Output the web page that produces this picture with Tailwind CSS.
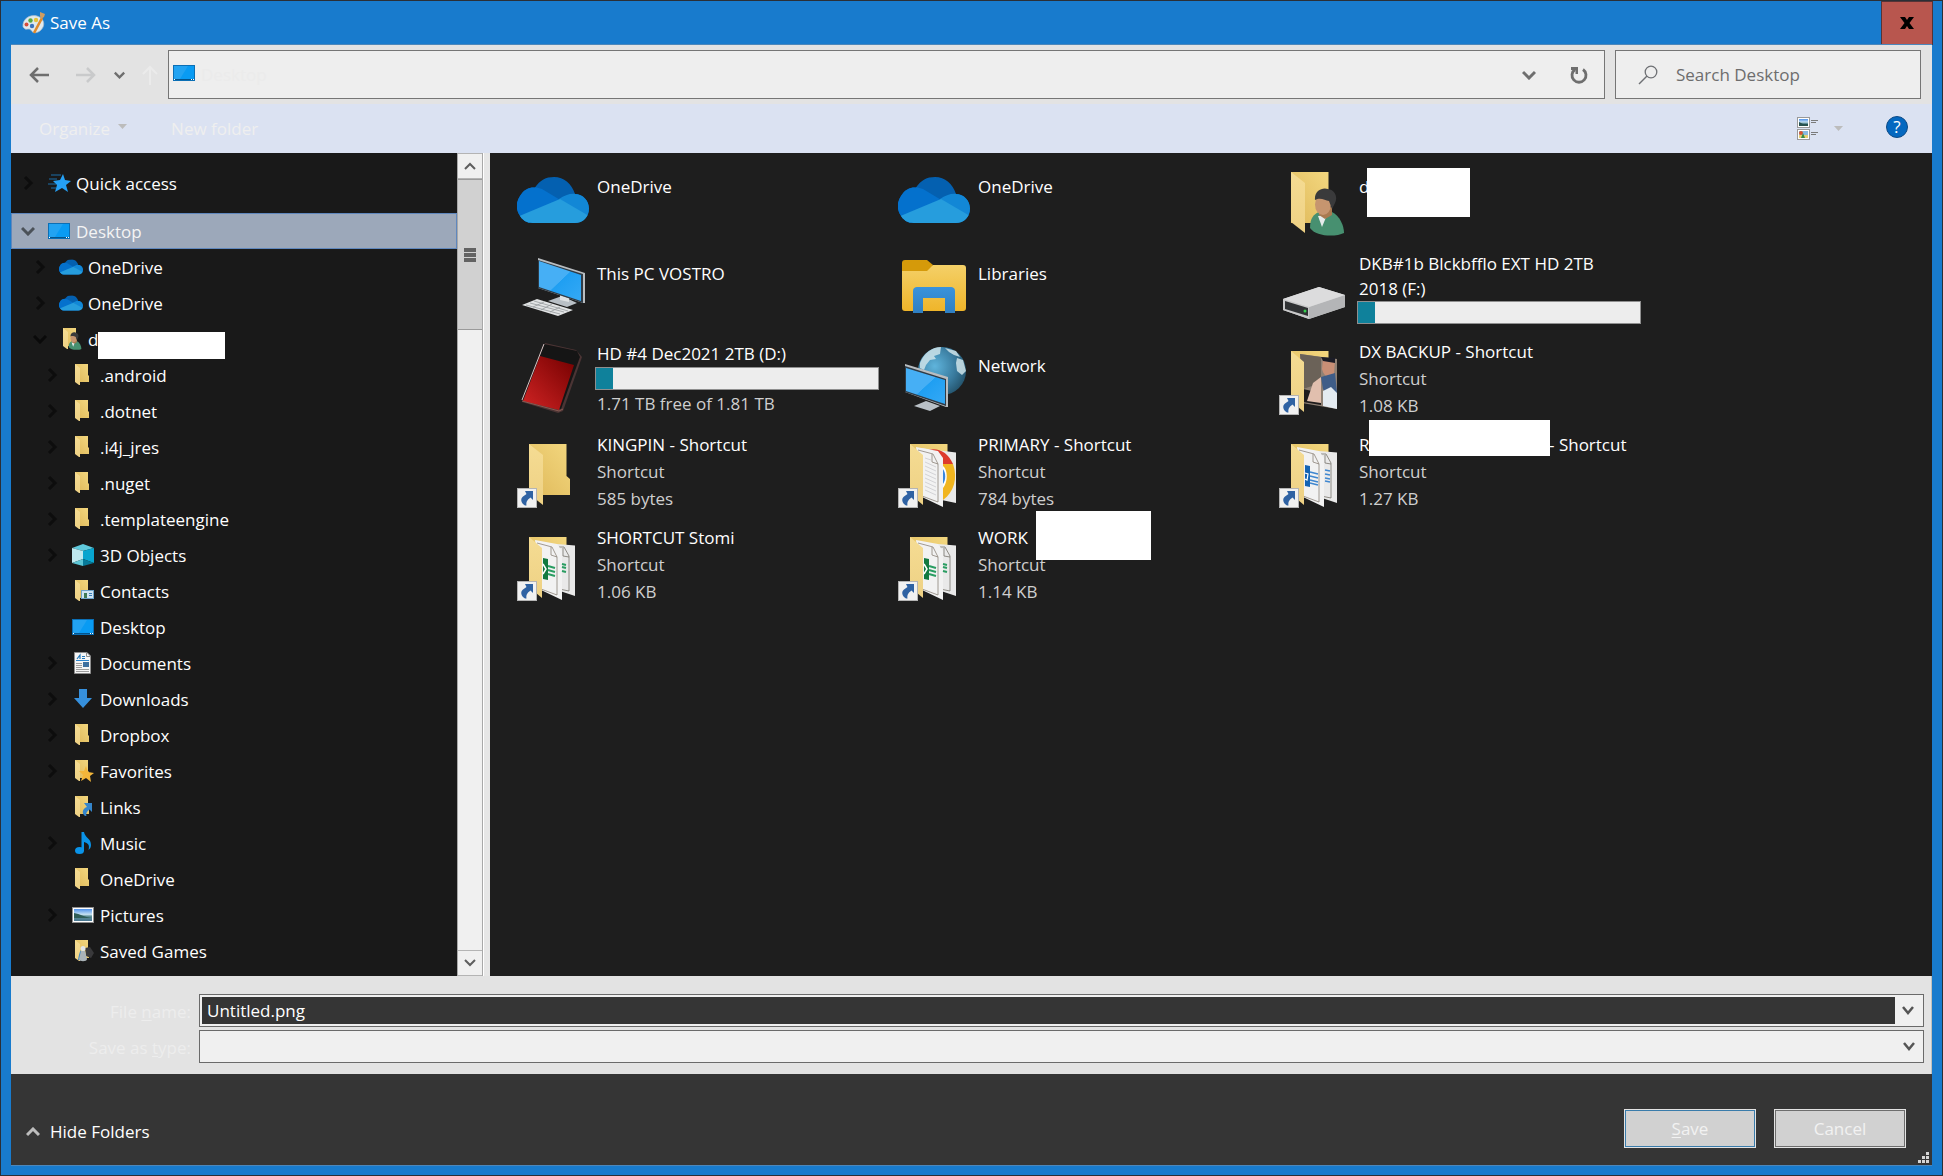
<!DOCTYPE html>
<html lang="en">
<head>
  <meta charset="UTF-8" />
  <title>Save As</title>
  <meta name="viewport" content="width=device-width, initial-scale=1" />
  <script src="https://cdn.jsdelivr.net/npm/@tailwindcss/browser@4"></script>
</head>
<body class="min-h-screen flex flex-col bg-[#187bcd] border border-[#2b2f36] px-[10px] pb-[9px] font-['Open_Sans','Noto_Sans',sans-serif] text-[17px] leading-[27px] text-white">

  <!-- Icon sprite -->
  <svg width="0" height="0" class="absolute" aria-hidden="true">
    <defs>
      <linearGradient id="gFolder" x1="0" y1="1" x2="1" y2="0"><stop offset="0" stop-color="#dfb95a" /><stop offset="1" stop-color="#f3d77f" /></linearGradient>
      <linearGradient id="gFlap" x1="0" y1="0" x2="0" y2="1"><stop offset="0" stop-color="#f5dc93" /><stop offset="1" stop-color="#eed184" /></linearGradient>
      <linearGradient id="gScreen" x1="0" y1="0" x2="1" y2="1"><stop offset="0" stop-color="#46aff5" /><stop offset=".5" stop-color="#46aff5" /><stop offset=".51" stop-color="#1f9ff2" /><stop offset="1" stop-color="#35a9f5" /></linearGradient>
      <linearGradient id="gRed" x1="1" y1="0" x2="0" y2="1"><stop offset="0" stop-color="#740000" /><stop offset="1" stop-color="#d12424" /></linearGradient>
      <linearGradient id="gLib" x1="0" y1="0" x2="0" y2="1"><stop offset="0" stop-color="#f4d068" /><stop offset="1" stop-color="#efb52a" /></linearGradient>
      <linearGradient id="gArch" x1="0" y1="0" x2="0" y2="1"><stop offset="0" stop-color="#3a93dc" /><stop offset="1" stop-color="#2f7fc2" /></linearGradient>
      <radialGradient id="gGlobe" cx=".35" cy=".4" r=".75"><stop offset="0" stop-color="#5fb4dc" /><stop offset=".6" stop-color="#38799c" /><stop offset="1" stop-color="#1f4a60" /></radialGradient>
      <linearGradient id="gDrive" x1="0" y1="0" x2="1" y2="1"><stop offset="0" stop-color="#dedede" /><stop offset="1" stop-color="#b9babb" /></linearGradient>
      <linearGradient id="gPhoto" x1="0" y1="0" x2="0" y2="1"><stop offset="0" stop-color="#4d90ea" /><stop offset=".45" stop-color="#c5e0f2" /><stop offset=".6" stop-color="#5f8f96" /><stop offset="1" stop-color="#477590" /></linearGradient>
    </defs>

    <symbol id="cloud" viewBox="0 0 72 46">
      <clipPath id="cloudShape"><path d="M16 46A16 17 0 0 1 3 19C7 12 13 10 18 10.500C23 3 29 0 37 0C47 0 55 7 58 17C66 17 72 24 72 31.500C72 40 66 46 58 46Z" /></clipPath>
      <g clip-path="url(#cloudShape)">
        <rect width="72" height="46" fill="#0460b0" />
        <path d="M0 10C8 9 18 9 25 12L45 24L12 46H0Z" fill="#0471cd" />
        <path d="M42 22C48 18 53 16 60 17L72 18V40L66 39Z" fill="#1287d6" />
        <path d="M0 40L43 22L72 39V46H0Z" fill="#269ddd" />
      </g>
    </symbol>

    <symbol id="desktop" viewBox="0 0 22 16">
      <rect x=".5" y=".5" width="21" height="15" fill="#099bf3" stroke="#0b6fb5" />
      <path d="M1 1H15L7 14H1Z" fill="#22a3f2" /><path d="M1 14.500H21" stroke="#04548c" />
      <path d="M1 14.500H2M18 14.500H19M20 14.500H21" stroke="#fff" />
    </symbol>

    <symbol id="folder-sm" viewBox="0 0 22 22">
      <path d="M3 0H16V11L17 12V18H3Z" fill="url(#gFolder)" /><path d="M3 0L8 4V21L7 21L3 18Z" fill="url(#gFlap)" />
    </symbol>

    <symbol id="folder" viewBox="0 0 72 72">
      <path d="M12 8H49.500V40L53 43V59H12Z" fill="url(#gFolder)" /><path d="M12 8L26 19V69L12 58Z" fill="url(#gFlap)" />
    </symbol>

    <symbol id="badge" viewBox="0 0 72 72">
      <rect x=".5" y="52.500" width="19" height="19" fill="#f1f1f1" stroke="#b4b4b4" />
      <path d="M8 55H16V64L13.500 61.500C10 64 9 66 9.500 69.500H8C4 67 3 63 6 60.500L9.500 58Z" fill="#2f62a3" />
    </symbol>

    <symbol id="docs" viewBox="0 0 72 72">
      <path d="M12 8H49.500V59H12Z" fill="url(#gFolder)" />
      <path d="M40 15L58 16.500V67L40 61Z" fill="#e9e9e9" /><path d="M42 18L47 18L52 27V62L42 60M46 19V27L52 28" fill="none" stroke="#77736c" stroke-width=".8" />
      <path d="M18 11L40 15L45 22V71L24 61Z" fill="#f2f2f2" /><path d="M20 14L35 18L40 28V66L24 60M34 18V26L40 28" fill="none" stroke="#8b8378" stroke-width=".8" />
      <path d="M12 8L25 19V69L12 58Z" fill="url(#gFlap)" />
    </symbol>

    <symbol id="person" viewBox="0 0 34 48">
      <path d="M0 40C0 30 4 26 9 24H22C30 28 34 38 34 45C26 49 6 49 0 40Z" fill="#479070" />
      <path d="M8 28L12 39L17 27Z" fill="#e6ecec" /><path d="M9 22V27L15 31L22 27V19Z" fill="#a97a50" />
      <ellipse cx="13" cy="16.500" rx="8" ry="10.500" fill="#c6956f" />
      <path d="M5 12C4 3 12 -1 18 1C25 2 28 9 25 15L22 21L19 13C15 12 10 9 5 12Z" fill="#3a3a3b" />
    </symbol>

    <symbol id="chev-r" viewBox="0 0 12 16"><path d="M2 2L8 8L2 14" fill="none" stroke="#0d0d0d" stroke-width="3" /></symbol>
    <symbol id="chev-d" viewBox="0 0 14 10"><path d="M1 2L7 8L13 2" fill="none" stroke="currentColor" stroke-width="3" /></symbol>
  </svg>

  <!-- Title bar -->
  <header class="flex h-[43px] items-center pl-[11px]">
    <svg class="h-6 w-6" viewBox="0 0 24 24">
      <path d="M1 16C0 8 8 3 15 5C22 7 24 14 19 19C15 23 10 22 9 19C7 17 5 19 3 18Z" fill="#dfe9ee" stroke="#a9bccb" stroke-width=".7" />
      <circle cx="4.500" cy="13.500" r="2" fill="#d64c3c" /><circle cx="8.500" cy="9.500" r="2.200" fill="#57a845" /><circle cx="14" cy="9" r="2.200" fill="#e5c23c" /><circle cx="10" cy="15" r="2.200" fill="#3b74bd" />
      <path d="M12 22L20 7" stroke="#e08a2b" stroke-width="2.600" /><path d="M18 1L23 3L22 6L19 8L18 5Z" fill="#cf9d62" />
    </svg>
    <h1 class="ml-1">Save As</h1>
    <button aria-label="Close" class="-mr-px ml-auto flex h-[44px] w-[52px] items-center justify-center border border-[#553336] bg-[#b8564e]">
      <svg class="h-3 w-[14px]" viewBox="0 0 14 12"><path d="M0 0H5L7 3L9 0H14L9.500 6L14 12H9L7 9L5 12H0L4.500 6Z" fill="#000" /></svg>
    </button>
  </header>

  <main class="flex flex-1 flex-col border-y border-[#4c87bb]">
    <!-- Address row -->
    <nav class="flex h-[59px] items-center bg-[#e3e3e3] pl-[18px] pr-[11px]">
      <button aria-label="Back"><svg class="h-4 w-5" viewBox="0 0 20 16"><path d="M20 8H3M9 1L2 8L9 15" fill="none" stroke="#6e6e6e" stroke-width="2.500" /></svg></button>
      <button aria-label="Forward" class="ml-[27px]"><svg class="h-4 w-5" viewBox="0 0 20 16"><path d="M0 8H17M11 1L18 8L11 15" fill="none" stroke="#c9cacb" stroke-width="2.500" /></svg></button>
      <button aria-label="Recent locations" class="ml-[18px] text-[#6e6e6e]"><svg class="h-2 w-[11px]" viewBox="0 0 14 10"><use href="#chev-d" /></svg></button>
      <button aria-label="Up" class="ml-[17px]"><svg class="h-5 w-4" viewBox="0 0 16 20"><path d="M8 20V2M1 9L8 2L15 9" fill="none" stroke="#ebebeb" stroke-width="2" /></svg></button>
      <div class="ml-[10px] flex h-[49px] flex-1 items-center border border-[#757575] bg-[#eeeeee] pl-1 pr-4">
        <svg class="mb-[3px] h-4 w-[22px]"><use href="#desktop" /></svg>
        <span class="ml-[6px] text-[#ebebeb]">Desktop</span>
        <button aria-label="Previous locations" class="ml-auto text-[#6e6e6e]"><svg class="h-[10px] w-[14px]"><use href="#chev-d" /></svg></button>
        <button aria-label="Refresh" class="ml-[34px]"><svg class="h-[18px] w-[18px]" viewBox="0 0 18 18"><path d="M5 3.500A7 7 0 1 0 13 3.500" fill="none" stroke="#6e6e6e" stroke-width="2.800" /><path d="M1 1H8V8L5.500 8V4H1Z" fill="#6e6e6e" /></svg></button>
      </div>
      <div class="ml-[10px] flex h-[49px] w-[306px] items-center border border-[#757575] bg-[#eeeeee] pl-[22px]">
        <svg class="h-5 w-5 shrink-0" viewBox="0 0 20 20"><circle cx="13" cy="7" r="5.800" fill="none" stroke="#6e7074" stroke-width="1.300" /><path d="M9 11L1 19" stroke="#6e7074" stroke-width="1.500" /></svg>
        <input aria-label="Search Desktop" type="text" placeholder="Search Desktop" class="ml-[18px] w-full min-w-0 bg-transparent outline-none placeholder:text-[#6d6d6d]" />
      </div>
    </nav>

    <!-- Command bar -->
    <div class="flex h-[49px] items-center bg-[#dbe2f2] pl-7 pr-6 text-[#efefef]">
      <button class="flex items-center gap-2">Organize <svg class="mb-1 h-[5px] w-[9px]" viewBox="0 0 9 5"><path d="M0 0H9L4.500 5Z" fill="#bcbcbc" /></svg></button>
      <button class="ml-[44px]">New folder</button>
      <button aria-label="Change your view" class="ml-auto flex items-center gap-[15px]">
        <svg class="h-6 w-[22px]" viewBox="0 0 22 24">
          <rect x=".5" y=".5" width="12" height="10" fill="#fff" stroke="#999" /><rect x="2" y="2" width="9" height="7" fill="url(#gPhoto)" /><path d="M2 5L6 7H11V9H2Z" fill="#28524f" />
          <rect x=".5" y="12.500" width="12" height="10" fill="#fff" stroke="#999" /><rect x="2" y="14" width="9" height="7" fill="#8bbbe0" /><path d="M2 18H11V21H2Z" fill="#e7cf72" /><circle cx="4" cy="16" r="2" fill="#d8552e" /><path d="M4 21L6 16L8 21Z" fill="#3b8b45" />
          <path d="M14 3.500H21M14 5.500H19M14 15.500H21M14 17.500H19" stroke="#7a7a7a" />
        </svg>
        <svg class="h-[5px] w-[9px]" viewBox="0 0 9 5"><path d="M0 0H9L4.500 5Z" fill="#bcbcbc" /></svg>
      </button>
      <button aria-label="Help" class="ml-[43px] mb-[3px] flex h-[22px] w-[22px] items-center justify-center rounded-full border border-[#0d4a86] bg-[#0568c0] font-['Open_Sans'] text-[17px] leading-5 text-white">?</button>
    </div>

    <div class="flex flex-1">
      <!-- Folder tree -->
      <aside class="flex w-[473px] shrink-0 border-r border-white bg-[#191919]">
        <ul class="min-w-0 flex-1 pb-[7px]">
          <li class="flex h-[60px] items-center pl-3">
            <svg class="h-4 w-3"><use href="#chev-r" /></svg>
            <svg class="ml-[13px] mr-[5px] h-[22px] w-[23px]" viewBox="0 0 23 22"><path d="M15 2L17 8L23 9L18 13L20 20L14 16L7 20L9 13L5 9L12 8Z" fill="#25a0f4" /><path d="M3 3H13M1 7H9M0 12H8M3 16H8" stroke="#1d6fa9" stroke-width="1" /></svg>
            Quick access
          </li>
          <li class="flex h-9 items-center border border-[#5f87bd] bg-[#9ca8ba] pl-[9px] text-[#f4f4f4]">
            <svg class="h-[10px] w-[14px] text-[#4b5259]"><use href="#chev-d" /></svg>
            <svg class="ml-[13px] mr-[6px] h-4 w-[22px]"><use href="#desktop" /></svg>
            Desktop
          </li>
          <li class="flex h-9 items-center pl-6"><svg class="h-4 w-3"><use href="#chev-r" /></svg><svg class="ml-3 mr-[5px] h-4 w-6"><use href="#cloud" /></svg>OneDrive</li>
          <li class="flex h-9 items-center pl-6"><svg class="h-4 w-3"><use href="#chev-r" /></svg><svg class="ml-3 mr-[5px] h-4 w-6"><use href="#cloud" /></svg>OneDrive</li>
          <li class="relative flex h-9 items-center pl-[22px]">
            <svg class="h-[10px] w-[14px] text-[#0a0a0a]"><use href="#chev-d" /></svg>
            <svg class="ml-[13px] mr-[6px] h-[22px] w-[22px]" viewBox="0 0 22 22"><use href="#folder-sm" width="22" height="22" /><use href="#person" x="8" y="4" width="14" height="18" /></svg>
            d<span class="absolute left-[87px] top-[11px] h-[27px] w-[127px] bg-white"></span>
          </li>
          <li class="flex h-9 items-center pl-9"><svg class="h-4 w-3"><use href="#chev-r" /></svg><svg class="ml-[13px] mr-[6px] h-[22px] w-[22px]"><use href="#folder-sm" /></svg>.android</li>
          <li class="flex h-9 items-center pl-9"><svg class="h-4 w-3"><use href="#chev-r" /></svg><svg class="ml-[13px] mr-[6px] h-[22px] w-[22px]"><use href="#folder-sm" /></svg>.dotnet</li>
          <li class="flex h-9 items-center pl-9"><svg class="h-4 w-3"><use href="#chev-r" /></svg><svg class="ml-[13px] mr-[6px] h-[22px] w-[22px]"><use href="#folder-sm" /></svg>.i4j_jres</li>
          <li class="flex h-9 items-center pl-9"><svg class="h-4 w-3"><use href="#chev-r" /></svg><svg class="ml-[13px] mr-[6px] h-[22px] w-[22px]"><use href="#folder-sm" /></svg>.nuget</li>
          <li class="flex h-9 items-center pl-9"><svg class="h-4 w-3"><use href="#chev-r" /></svg><svg class="ml-[13px] mr-[6px] h-[22px] w-[22px]"><use href="#folder-sm" /></svg>.templateengine</li>
          <li class="flex h-9 items-center pl-9">
            <svg class="h-4 w-3"><use href="#chev-r" /></svg>
            <svg class="ml-[13px] mr-[6px] h-[22px] w-[22px]" viewBox="0 0 22 22"><path d="M0 4L11 0L22 4L11 7Z" fill="#5fc9dc" /><path d="M0 4L11 7V15L0 19Z" fill="#bfe8ef" /><path d="M11 7L22 4V19L11 15Z" fill="#08a5cf" /><path d="M0 19L11 15V22Z" fill="#5cc6d6" /><path d="M11 15L22 19L11 22Z" fill="#067a99" /></svg>
            3D Objects
          </li>
          <li class="flex h-9 items-center pl-[61px]">
            <svg class="mr-[6px] h-[22px] w-[22px]" viewBox="0 0 22 22"><use href="#folder-sm" width="22" height="22" /><rect x="9.500" y="10.500" width="12" height="8" fill="#cfe5f3" stroke="#6fa3c8" /><path d="M12 18V13H15V18Z" fill="#3f7a56" /><path d="M17 13.500H20M17 15.500H20" stroke="#3a7db8" /></svg>
            Contacts
          </li>
          <li class="flex h-9 items-center pl-[61px]"><svg class="mr-[6px] h-4 w-[22px]"><use href="#desktop" /></svg>Desktop</li>
          <li class="flex h-9 items-center pl-9">
            <svg class="h-4 w-3"><use href="#chev-r" /></svg>
            <svg class="ml-[13px] mr-[6px] h-[22px] w-[22px]" viewBox="0 0 22 22"><path d="M2.500 .5H15L18.500 4V21.500H2.500Z" fill="#f5f5f5" stroke="#8d8d8d" /><path d="M14.500 1V4.500H18" fill="none" stroke="#8d8d8d" /><path d="M5 7L8 3V7M10 4.500H13M10 6.500H13" fill="none" stroke="#2277b8" stroke-width="1.200" /><path d="M4 8.500H17" stroke="#2c84cc" /><path d="M4 11.500H10M4 13.500H10M4 15.500H10M4 17.500H17M4 19.500H17" stroke="#9c9c9c" /><rect x="11" y="10" width="6" height="5" fill="#3d6f9e" /></svg>
            Documents
          </li>
          <li class="flex h-9 items-center pl-9">
            <svg class="h-4 w-3"><use href="#chev-r" /></svg>
            <svg class="ml-[13px] mr-[6px] h-[22px] w-[22px]" viewBox="0 0 22 22"><path d="M7 1H15V10H20L11 20L2 10H7Z" fill="#3690dd" /></svg>
            Downloads
          </li>
          <li class="flex h-9 items-center pl-9"><svg class="h-4 w-3"><use href="#chev-r" /></svg><svg class="ml-[13px] mr-[6px] h-[22px] w-[22px]"><use href="#folder-sm" /></svg>Dropbox</li>
          <li class="flex h-9 items-center pl-9">
            <svg class="h-4 w-3"><use href="#chev-r" /></svg>
            <svg class="ml-[13px] mr-[6px] h-[22px] w-[22px]" viewBox="0 0 22 22"><use href="#folder-sm" width="22" height="22" /><path d="M14 6L16 12L22 13L18 16L19 22L14 18L9 21L11 15L7 11L12 11Z" fill="#f3b63a" /></svg>
            Favorites
          </li>
          <li class="flex h-9 items-center pl-[61px]">
            <svg class="mr-[6px] h-[22px] w-[22px]" viewBox="0 0 22 22"><use href="#folder-sm" width="22" height="22" /><path d="M12 7H20V16L17.500 13.500C14 16 14 18 14.500 20H13C9 17 11 12 15 11Z" fill="#3485cb" /></svg>
            Links
          </li>
          <li class="flex h-9 items-center pl-9">
            <svg class="h-4 w-3"><use href="#chev-r" /></svg>
            <svg class="ml-[13px] mr-[6px] h-[22px] w-[22px]" viewBox="0 0 22 22"><ellipse cx="7.500" cy="18.500" rx="4.500" ry="3.500" fill="#0a93e8" /><path d="M9.500 0H12C13 6 19 6 19 13C19 15 18 17 16.500 18C18 13 16 11 12 10V19H9.500Z" fill="#0a93e8" /></svg>
            Music
          </li>
          <li class="flex h-9 items-center pl-[61px]"><svg class="mr-[6px] h-[22px] w-[22px]"><use href="#folder-sm" /></svg>OneDrive</li>
          <li class="flex h-9 items-center pl-9">
            <svg class="h-4 w-3"><use href="#chev-r" /></svg>
            <svg class="ml-[13px] mr-[6px] h-4 w-[22px]" viewBox="0 0 22 16"><rect x=".5" y=".5" width="21" height="15" fill="#fff" stroke="#8e8e8e" /><rect x="2" y="2" width="18" height="12" fill="url(#gPhoto)" /><path d="M2 6C8 7 12 10 20 11H2Z" fill="#2f5d57" /></svg>
            Pictures
          </li>
          <li class="flex h-9 items-center pl-[61px]">
            <svg class="mr-[6px] h-[22px] w-[22px]" viewBox="0 0 22 22"><use href="#folder-sm" width="22" height="22" /><path d="M13 8L18 7L22 13L19 18L14 16Z" fill="#39393b" /><path d="M6 20C7 14 8 11 9 10L10 20Z" fill="#3e86bf" /><circle cx="11" cy="8.500" r="2.500" fill="#e2e6e8" /><path d="M9 11H13L15 19C15 22 7 22 7 19Z" fill="#aab3b8" /></svg>
            Saved Games
          </li>
        </ul>
        <!-- Scroll bar -->
        <div class="flex w-[26px] flex-col border-x border-[#a8a8a8] bg-[#f0f0f0]">
          <button aria-label="Scroll up" class="flex h-[26px] items-center justify-center border-y border-[#b4b4b4] text-[#5e5e5e]"><svg class="h-2 w-3 rotate-180" viewBox="0 0 12 8"><path d="M1 1L6 6L11 1" fill="none" stroke="currentColor" stroke-width="2" /></svg></button>
          <div class="flex h-[151px] flex-col items-center justify-center gap-px border-y border-[#9a9a9a] bg-[#d1d1d1]">
            <span class="h-1 w-3 bg-[#636363]"></span><span class="h-1 w-3 bg-[#636363]"></span><span class="h-1 w-3 bg-[#636363]"></span>
          </div>
          <button aria-label="Scroll down" class="mt-auto flex h-[26px] items-center justify-center border-y border-[#b4b4b4] text-[#5e5e5e]"><svg class="h-2 w-3" viewBox="0 0 12 8"><path d="M1 1L6 6L11 1" fill="none" stroke="currentColor" stroke-width="2" /></svg></button>
        </div>
      </aside>
      <div class="w-[6px] shrink-0 bg-[#e6e6e6]"></div>

      <!-- Files -->
      <section class="grid flex-1 grid-cols-[repeat(3,381px)] grid-rows-[84px_90px_93px_93px_93px] content-start bg-[#1e1e1e] pl-[27px] pt-[5px]">
        <div class="flex items-center gap-[6px]">
          <svg class="h-[46px] w-[72px] shrink-0"><use href="#cloud" /></svg>
          <div class="h-[54px] px-[2px]">OneDrive</div>
        </div>
        <div class="flex items-center gap-[6px]">
          <svg class="h-[46px] w-[72px] shrink-0"><use href="#cloud" /></svg>
          <div class="h-[54px] px-[2px]">OneDrive</div>
        </div>
        <div class="flex items-center gap-[6px]">
          <svg class="h-[72px] w-[72px] shrink-0" viewBox="0 0 72 72"><path d="M12 8H49.500V59H12Z" fill="url(#gFolder)" /><path d="M12 8L26 19V69L12 58Z" fill="url(#gFlap)" /><use href="#person" x="31" y="24" width="34" height="48" /></svg>
          <div class="relative h-[54px] px-[2px]">d<span class="absolute left-[10px] -top-[5px] h-[49px] w-[103px] bg-white"></span></div>
        </div>

        <div class="flex items-center gap-[6px]">
          <svg class="h-[72px] w-[72px] shrink-0" viewBox="0 0 72 72">
            <path d="M31 50L45 45L60 52L50 56Z" fill="#b9c0c6" /><path d="M43 44L52 47V51L43 49Z" fill="#dfe2e4" />
            <path d="M21 7L68 22V52L66 52L21 37Z" fill="#b9bdc0" /><path d="M21 9L66 23V52L21 37Z" fill="#2f3b46" /><path d="M22 10L64 24V50L22 36Z" fill="url(#gScreen)" />
            <path d="M5 54L20 48L56 59L41 65Z" fill="#e1e3e4" /><path d="M9 54L43 63M13 52L47 61M17 50L51 60M16 56L27 51M24 59L35 53M33 61L43 56" stroke="#94999c" stroke-width=".8" />
          </svg>
          <div class="h-[54px] px-[2px]">This PC VOSTRO</div>
        </div>
        <div class="flex items-center gap-[6px]">
          <svg class="h-[72px] w-[72px] shrink-0" viewBox="0 0 72 72">
            <path d="M4 12C4 10 5 9 7 9H29L35 14L30 24H4Z" fill="#d59a0a" />
            <path d="M4 20H29L35 14H65C67 14 68 15 68 17V57C68 59 67 60 65 60H7C5 60 4 59 4 57Z" fill="url(#gLib)" />
            <path d="M15 62V40C15 37 17 36 19 36H53C55 36 57 37 57 40V62H47V47H25V62Z" fill="url(#gArch)" />
          </svg>
          <div class="h-[54px] px-[2px]">Libraries</div>
        </div>
        <div class="flex items-center gap-[6px]">
          <svg class="h-[72px] w-[72px] shrink-0" viewBox="0 0 72 72">
            <path d="M4 48L40 36L66 44V56L30 68L4 59Z" fill="url(#gDrive)" /><path d="M30 56L66 44V56L30 68Z" fill="#b4b5b7" /><path d="M4 48L40 36L66 44L30 56Z" fill="#dcdcdd" />
            <path d="M4 48L30 56V68L4 59Z" fill="#c9c9ca" /><path d="M6 50L29 57V65L6 58Z" fill="#303234" /><circle cx="26" cy="60" r="1.500" fill="#35cf4e" />
          </svg>
          <div>
            <div class="px-[2px] leading-[25px]">DKB#1b Blckbfflo EXT HD 2TB<br />2018 (F:)</div>
            <div class="h-[23px] w-[284px] border border-[#8f8f8f] bg-[#ededed]"><div class="h-full bg-[#0f819b]" style="width: 6%"></div></div>
          </div>
        </div>

        <div class="flex items-center gap-[6px]">
          <svg class="h-[72px] w-[72px] shrink-0" viewBox="0 0 72 72">
            <path d="M28 0L59 7L65 14L46 68L41 70L5 59Z" fill="#4b3434" /><path d="M27 1L60 8L63 14L44 66L5 57Z" fill="#151515" />
            <path d="M23 13L57 22L42 67L6 58Z" fill="url(#gRed)" /><path d="M27 1L5 57" stroke="#d9c5c5" /><path d="M5 58L42 68L46 66" fill="none" stroke="#8a5a52" />
          </svg>
          <div>
            <div class="px-[2px]">HD #4 Dec2021 2TB (D:)</div>
            <div class="h-[23px] w-[284px] border border-[#8f8f8f] bg-[#ededed]"><div class="h-full bg-[#0f819b]" style="width: 6%"></div></div>
            <div class="px-[2px] text-[#cfcfcf]">1.71 TB free of 1.81 TB</div>
          </div>
        </div>
        <div class="flex items-center gap-[6px]">
          <svg class="h-[72px] w-[72px] shrink-0" viewBox="0 0 72 72">
            <circle cx="44" cy="28" r="24" fill="url(#gGlobe)" />
            <path d="M22 20C26 10 34 4 43 4L42 11L36 13L38 16L32 17L28 22L26 27L22 25ZM47 5L58 8L62 14L56 12L51 9ZM59 15L65 17L68 28L64 32L59 28L58 20Z" fill="#cfe4ea" opacity=".85" />
            <path d="M16 63L28 58L42 63L32 68Z" fill="#b9c0c6" />
            <path d="M7 21L50 34V64L48 64L7 49Z" fill="#b9bdc0" /><path d="M7 23L48 36V63L7 49Z" fill="#2f3b46" /><path d="M8 25L47 37V61L8 48Z" fill="url(#gScreen)" />
          </svg>
          <div class="h-[54px] px-[2px]">Network</div>
        </div>
        <div class="flex items-center gap-[6px]">
          <svg class="h-[72px] w-[72px] shrink-0" viewBox="0 0 72 72">
            <path d="M12 8H49.500V59H12Z" fill="url(#gFolder)" />
            <path d="M21 11L58 16V66L23 60Z" fill="#8f8175" /><path d="M21 11L42 14V40L24 46Z" fill="#6b6258" /><path d="M24 46L42 50V62L24 59Z" fill="#1f1c1c" /><path d="M44 15L56 17L55 31C51 37 45 34 43 26Z" fill="#c88f76" /><path d="M42 14L56 15V20L44 18Z" fill="#1b1c26" /><path d="M42 34L56 30L58 50L50 56L44 46Z" fill="#3f5d88" /><path d="M34 40L42 34V60L28 58Z" fill="#e1bfae" /><path d="M44 48L52 44L58 50V66L44 63Z" fill="#e4ebf1" />
            <path d="M12 8L25 19V69L12 58Z" fill="url(#gFlap)" /><use href="#badge" />
          </svg>
          <div class="px-[2px] text-[#cfcfcf]"><div class="text-white">DX BACKUP - Shortcut</div><div>Shortcut</div><div>1.08 KB</div></div>
        </div>

        <div class="flex items-center gap-[6px]">
          <svg class="h-[72px] w-[72px] shrink-0" viewBox="0 0 72 72"><use href="#folder" /><use href="#badge" /></svg>
          <div class="px-[2px] text-[#cfcfcf]"><div class="text-white">KINGPIN - Shortcut</div><div>Shortcut</div><div>585 bytes</div></div>
        </div>
        <div class="flex items-center gap-[6px]">
          <svg class="h-[72px] w-[72px] shrink-0" viewBox="0 0 72 72">
            <path d="M12 8H49.500V59H12Z" fill="url(#gFolder)" /><path d="M22 12L58 16.500V67L24 60Z" fill="#e9e9e9" />
            <path d="M30 14C40 11 50 16 55 28H38Z" fill="#dd3a2b" /><path d="M55 28C60 42 56 56 45 64V28Z" fill="#f1b51f" /><path d="M45 30C50 34 50 46 45 52Z" fill="#fff" /><path d="M45 33C48 37 48 44 45 48Z" fill="#3a86dd" />
            <path d="M18 11L40 15L45 22V71L24 61Z" fill="#f2f2f2" /><path d="M20 14L35 18L40 28V66L24 60M34 18V26L40 28" fill="none" stroke="#8b8378" stroke-width=".8" />
            <path d="M27 22L33 24M27 26L38 31M27 30L38 35M27 34L38 39M27 38L38 43M27 42L38 47M27 46L38 51M27 50L38 55M27 54L38 59" stroke="#d3d3d6" />
            <path d="M12 8L25 19V69L12 58Z" fill="url(#gFlap)" /><use href="#badge" />
          </svg>
          <div class="px-[2px] text-[#cfcfcf]"><div class="text-white">PRIMARY - Shortcut</div><div>Shortcut</div><div>784 bytes</div></div>
        </div>
        <div class="flex items-center gap-[6px]">
          <svg class="h-[72px] w-[72px] shrink-0" viewBox="0 0 72 72"><use href="#docs" /><path d="M26 29L31 30V51L26 50Z" fill="#1464b4" /><path d="M31 36L39 38M31 40L39 42M31 44L39 46M31 47L39 49M46 34L51 35M46 38L51 39M46 42L51 43M46 45L51 46" stroke="#3f87d0" stroke-width="1.500" /><path d="M26 37L29 38L28 44L26 43" fill="none" stroke="#fff" stroke-width="1.200" /><use href="#badge" /></svg>
          <div class="px-[2px] text-[#cfcfcf]"><div class="relative flex text-white"><span class="w-[190px]">R</span><span class="absolute left-[10px] -top-[11px] h-[36px] w-[181px] bg-white"></span>- Shortcut</div><div>Shortcut</div><div>1.27 KB</div></div>
        </div>

        <div class="flex items-center gap-[6px]">
          <svg class="h-[72px] w-[72px] shrink-0" viewBox="0 0 72 72"><use href="#docs" /><path d="M26 29L31 30V51L26 50Z" fill="#12793f" /><path d="M26 35L29 40L26 45" fill="none" stroke="#fff" stroke-width="1.500" /><path d="M31 37L38 39M31 41L38 43M31 45L38 47M45 35L49 36M45 38L49 39M45 42L49 43" stroke="#2a9d62" stroke-width="2" /><use href="#badge" /></svg>
          <div class="px-[2px] text-[#cfcfcf]"><div class="text-white">SHORTCUT Stomi</div><div>Shortcut</div><div>1.06 KB</div></div>
        </div>
        <div class="flex items-center gap-[6px]">
          <svg class="h-[72px] w-[72px] shrink-0" viewBox="0 0 72 72"><use href="#docs" /><path d="M26 29L31 30V51L26 50Z" fill="#12793f" /><path d="M26 35L29 40L26 45" fill="none" stroke="#fff" stroke-width="1.500" /><path d="M31 37L38 39M31 41L38 43M31 45L38 47M45 35L49 36M45 38L49 39M45 42L49 43" stroke="#2a9d62" stroke-width="2" /><use href="#badge" /></svg>
          <div class="px-[2px] text-[#cfcfcf]"><div class="relative text-white">WORK<span class="absolute left-[58px] -top-[13px] h-[49px] w-[115px] bg-white"></span></div><div>Shortcut</div><div>1.14 KB</div></div>
        </div>
      </section>
    </div>

    <!-- File name and type -->
    <form class="grid grid-cols-[180px_1fr] gap-x-2 gap-y-[3px] border-r border-[#c3c1ba] bg-[#e3e3e3] pb-[11px] pr-[7px] pt-[18px]">
      <label for="filename" class="pt-1 text-right text-[#ededed]">File <u class="underline-offset-2">n</u>ame:</label>
      <div class="flex h-[33px] border border-[#6a6a6a] bg-[#f0f0f0] p-[2px]">
        <input id="filename" type="text" value="Untitled.png" class="h-full min-w-0 flex-1 bg-[#353535] px-[5px] text-white outline-none" />
        <button type="button" aria-label="Previous file names" class="flex w-[26px] items-center justify-center text-[#555]"><svg class="h-[9px] w-3 text-[#555]" viewBox="0 0 12 9"><path d="M1 1L6 7L11 1" fill="none" stroke="currentColor" stroke-width="2.500" /></svg></button>
      </div>
      <label for="filetype" class="pt-1 text-right text-[#ededed]">Save as <u class="underline-offset-2">t</u>ype:</label>
      <div class="relative h-[33px]">
        <select id="filetype" class="h-full w-full appearance-none border border-[#6a6a6a] bg-[#f0f0f0] px-2 text-[#f0f0f0]"><option></option></select>
        <svg class="pointer-events-none absolute right-[9px] top-3 h-[9px] w-3 text-[#555]" viewBox="0 0 12 9"><path d="M1 1L6 7L11 1" fill="none" stroke="currentColor" stroke-width="2.500" /></svg>
      </div>
    </form>

    <!-- Footer -->
    <footer class="relative flex h-[91px] items-center bg-[#353535] pl-[15px] pr-[26px] pt-[17px]">
      <button class="mt-[7px] flex items-center gap-[10px]"><svg class="h-[10px] w-[14px] rotate-180 text-[#bdbdbd]"><use href="#chev-d" /></svg>Hide Folders</button>
      <button class="ml-auto h-[39px] w-[132px] border border-[#e3e3e3] bg-[#d1d1d1] p-0 text-[#f2f2f2]"><span class="flex h-full items-center justify-center border border-[#3a7cab]"><u class="underline-offset-2">S</u>ave</span></button>
      <button class="ml-[18px] h-[39px] w-[132px] border border-[#e3e3e3] bg-[#d1d1d1] p-0 text-[#f2f2f2]"><span class="flex h-full items-center justify-center border border-[#6d6d6d]">Cancel</span></button>
      <svg class="absolute bottom-[2px] right-[3px] h-[11px] w-[11px]" viewBox="0 0 11 11"><path d="M8 0H11V3H8ZM4 4H7V7H4ZM8 4H11V7H8ZM0 8H3V11H0ZM4 8H7V11H4ZM8 8H11V11H8Z" fill="#d5d5d5" /></svg>
    </footer>
  </main>
</body>
</html>
